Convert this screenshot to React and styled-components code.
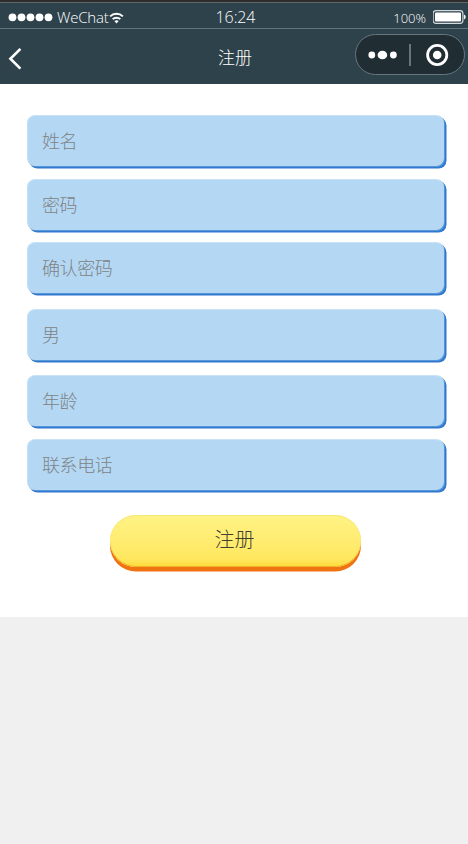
import React from 'react';
import styled, { createGlobalStyle } from 'styled-components';

const GlobalStyle = createGlobalStyle`
  *, *::before, *::after { box-sizing: border-box; }
  body {
    margin: 0;
    background: #f0f0f0;
    font-family: "Noto Sans", "Noto Sans CJK SC", sans-serif;
    font-weight: 300;
  }
`;

const Screen = styled.div`
  width: 468px;
  height: 844px;
  overflow: hidden;
  background: #f0f0f0;
`;

const Header = styled.header`
  height: 84px;
  background: #2e424b;
  border-top: 2px solid #2d2d2d;
  color: #fff;
`;

const StatusBar = styled.div`
  height: 27px;
  display: grid;
  grid-template-columns: 1fr auto 1fr;
  align-items: center;
  padding: 2px 1px 0 8px;
  border-top: 1px solid #62676a;
  border-bottom: 1px solid #61737b;
`;

const StatusGroup = styled.div`
  display: flex;
  align-items: center;
  justify-content: ${(p) => (p.$end ? 'flex-end' : 'flex-start')};
`;

const StatusText = styled.span`
  font-family: "Open Sans", "Noto Sans", sans-serif;
  font-size: ${(p) => p.$size}px;
  line-height: 22px;
  letter-spacing: ${(p) => p.$spacing || 0}px;
  margin: ${(p) => p.$margin || 0};
`;

const NavBar = styled.div`
  height: 55px;
  display: grid;
  grid-template-columns: 1fr auto 1fr;
  align-items: center;
  padding: 0 3px 0 7px;
`;

const BackButton = styled.button`
  width: 16px;
  height: 26px;
  padding: 0;
  margin-top: 4px;
  border: 0;
  background: none;
  display: flex;
`;

const Title = styled.h1`
  margin: 2px 0 0 -2px;
  font-size: 17px;
  line-height: 24px;
  font-weight: 300;
`;

const Capsule = styled.div`
  justify-self: end;
  width: 110px;
  height: 41px;
  margin-top: -5px;
  border: 1px solid #69777d;
  border-radius: 21px;
  background: #202d33;
  display: flex;
  align-items: center;
`;

const FormPanel = styled.main`
  height: 533px;
  padding: 31px 0 0 27px;
  background: #fff;
`;

const Field = styled.div`
  width: 417px;
  height: 51px;
  margin-bottom: ${(p) => p.$gap}px;
  padding: 0 15px 0 14px;
  display: flex;
  align-items: center;
  border-radius: 8px;
  background: #b4d8f4;
  border-top: 1px solid #c8e3f7;
  border-left: 1px solid #c1dff6;
  box-shadow: 1px 1px 0 #5795d9, 2.5px 2.5px 0 #3179ce;
  color: #7e8385;
  font-size: 18px;
  line-height: 26px;
  letter-spacing: -0.4px;
`;

const SubmitButton = styled.button`
  display: flex;
  align-items: center;
  justify-content: center;
  width: 251px;
  height: 52px;
  margin: 0 0 0 83px;
  padding: 0 2px 2px 0;
  border: 0;
  border-radius: 26px;
  background: linear-gradient(#fff385 0%, #ffed73 45%, #ffe75f 84%, #ffdb3b 100%);
  box-shadow: inset 0 1px 0 #f4e977, inset 0 -1px 0 #edb329, 0 4.5px 0 #f17310;
  color: #3e3e32;
  font-family: inherit;
  font-size: 20px;
  font-weight: 300;
  line-height: 28px;
`;

const Icon = styled.svg`
  display: block;
  flex: none;
`;

const SignalDots = () => (
  <Icon width="46" height="10" viewBox="0 0 46 10" fill="#fff">
    {[4.5, 13.5, 22.5, 31.5, 40.5].map((x) => (
      <circle key={x} cx={x} cy="5.3" r="3.9" />
    ))}
  </Icon>
);

const WifiIcon = () => (
  <Icon width="15" height="13" viewBox="0 0 16 13" fill="none" stroke="#fff" strokeWidth="2">
    <path d="M1.2 5.3C5 1.5 11 1.5 14.8 5.3M3.9 8.3c2.2-2.1 6-2.1 8.2 0" />
    <path d="M5.7 10.2c1.4-1 3.2-1 4.6 0L8 12.8Z" fill="#fff" stroke="none" />
  </Icon>
);

const BatteryIcon = () => (
  <Icon width="34" height="14" viewBox="0 0 34 14">
    <rect x=".1" y=".7" width="29.8" height="12.6" rx="2.8" fill="none" stroke="#d4dadd" strokeWidth="1.2" />
    <rect x="2" y="2.6" width="26" height="8.8" rx="1" fill="#fff" />
    <path d="M31 4.7c2.2.4 2.2 4.2 0 4.6Z" fill="#fff" />
  </Icon>
);

const BackIcon = () => (
  <Icon width="16" height="26" viewBox="0 0 16 26" fill="none" stroke="#fff" strokeWidth="2.6">
    <path d="M13.4 2.8 3.4 12.8l10 9.8" />
  </Icon>
);

const CapsuleIcons = () => (
  <Icon width="108" height="39" viewBox="0 0 108 39" fill="#fff">
    <circle cx="15.8" cy="20" r="3.4" />
    <ellipse cx="26.4" cy="20" rx="4.8" ry="4.3" />
    <circle cx="37.4" cy="20" r="3.4" />
    <rect x="53" y="9" width="2" height="22" fill="#68757a" />
    <circle cx="81.2" cy="20" r="9.6" fill="none" stroke="#fff" strokeWidth="2.8" />
    <circle cx="81.2" cy="20" r="4.3" />
  </Icon>
);

const fields = [
  { label: '姓名', gap: 13 },
  { label: '密码', gap: 12.4 },
  { label: '确认密码', gap: 15.6 },
  { label: '男', gap: 15.4 },
  { label: '年龄', gap: 12.6 },
  { label: '联系电话', gap: 25 },
];

export default function App() {
  return (
    <Screen>
      <GlobalStyle />
      <Header>
        <StatusBar>
          <StatusGroup>
            <SignalDots />
            <StatusText $size={15} $spacing={-0.2} $margin="-1px 0 0 3px">WeChat</StatusText>
            <WifiIcon />
          </StatusGroup>
          <StatusText $size={16} $spacing={-0.1} $margin="0 0 0 -4px">16:24</StatusText>
          <StatusGroup $end>
            <StatusText $size={13} $margin="2px 7px 0 0">100%</StatusText>
            <BatteryIcon />
          </StatusGroup>
        </StatusBar>
        <NavBar>
          <BackButton aria-label="返回"><BackIcon /></BackButton>
          <Title>注册</Title>
          <Capsule><CapsuleIcons /></Capsule>
        </NavBar>
      </Header>
      <FormPanel>
        {fields.map((field) => (
          <Field key={field.label} $gap={field.gap}>{field.label}</Field>
        ))}
        <SubmitButton type="button">注册</SubmitButton>
      </FormPanel>
    </Screen>
  );
}
